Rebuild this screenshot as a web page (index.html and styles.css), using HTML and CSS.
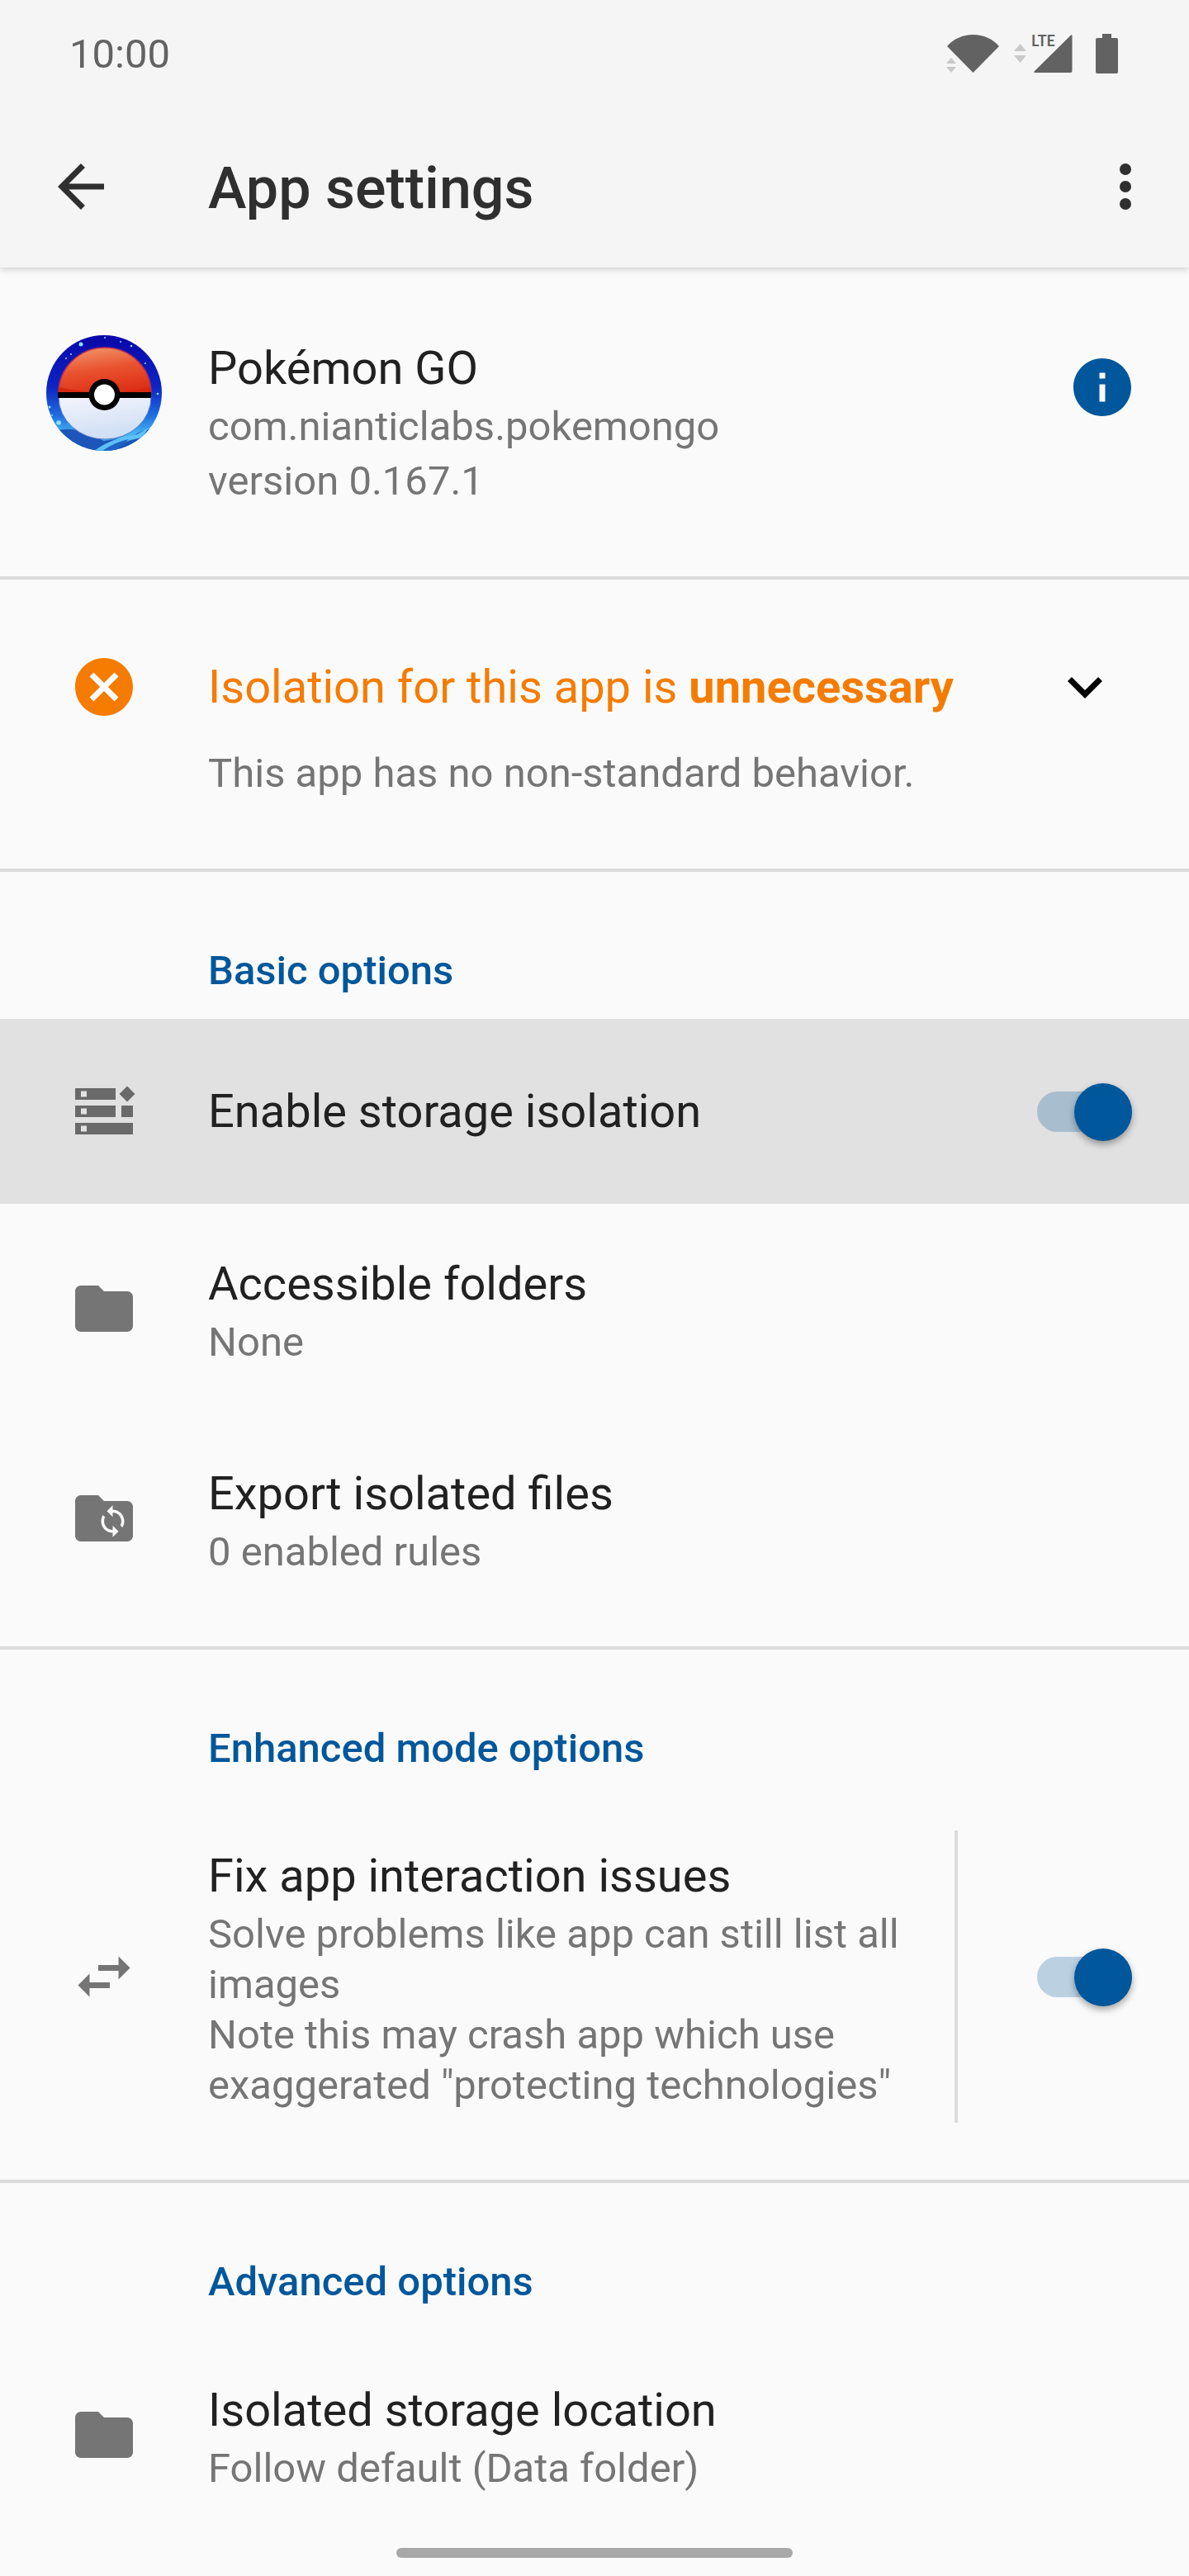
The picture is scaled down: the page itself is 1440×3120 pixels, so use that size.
FILE: index.html
```html
<!DOCTYPE html>
<html lang="en">
<head>
  <meta charset="UTF-8">
  <meta name="viewport" content="width=device-width, initial-scale=1.0">
  <title>App settings</title>
  <link rel="stylesheet" href="styles.css">
</head>
<body>
  <header class="top">
    <div class="status-bar">
      <span class="time">10:00</span>
      <div class="status-icons">
        <svg width="66" height="56" viewBox="0 -4 66 56">
          <path fill="#626262" d="M1 15C9 6 20 1 32.500 1S56 6 64 15L32.500 47z"/>
          <path fill="#c9c9c9" d="M0 36l6-7 6 7zM0 40h12l-6 7z"/>
        </svg>
        <svg width="83" height="56" viewBox="0 -4 83 56">
          <path fill="#c9c9c9" d="M0 21l7.500-9 7.500 9zM0 26h15l-7.500 9z"/>
          <path fill="#626262" d="M69 1.500q1.500-1 1.500 1V45q0 2-2 2H26q-2.500 0-1.500-1.500z"/>
          <text class="lte" x="21" y="15">LTE</text>
        </svg>
        <svg width="27" height="56" viewBox="0 -4 27 56">
          <path fill="#626262" d="M8 0h11v5h6q2 0 2 2v39q0 2-2 2H2q-2 0-2-2V7q0-2 2-2h6z"/>
        </svg>
      </div>
    </div>
    <div class="toolbar">
      <button class="icon-button" aria-label="Back">
        <svg class="icon" viewBox="0 0 24 24"><path d="M20 11H7.830l5.590-5.590L12 4l-8 8 8 8 1.410-1.410L7.830 13H20z"/></svg>
      </button>
      <h1>App settings</h1>
      <button class="icon-button" aria-label="More options">
        <svg class="icon" viewBox="0 0 24 24"><circle cx="12" cy="6" r="2"/><circle cx="12" cy="12" r="2"/><circle cx="12" cy="18" r="2"/></svg>
      </button>
    </div>
  </header>

  <main>
    <section class="app-info">
      <div class="icon-cell">
        <svg width="140" height="140" viewBox="0 0 140 140">
          <defs>
            <linearGradient id="sky" x1="0" y1="0" x2="0" y2="1">
              <stop offset="0" stop-color="#0a06a8"/>
              <stop offset="0.450" stop-color="#0d25c4"/>
              <stop offset="0.700" stop-color="#1e6fe0"/>
              <stop offset="0.850" stop-color="#45b4f5"/>
            </linearGradient>
            <linearGradient id="red" x1="0.200" y1="0" x2="0.500" y2="1">
              <stop offset="0" stop-color="#f0956a"/>
              <stop offset="0.500" stop-color="#e9532f"/>
              <stop offset="1" stop-color="#dd3016"/>
            </linearGradient>
            <linearGradient id="white" x1="0" y1="0" x2="0.300" y2="1">
              <stop offset="0" stop-color="#f4f4fc"/>
              <stop offset="1" stop-color="#cfdff5"/>
            </linearGradient>
            <clipPath id="badge"><circle cx="70" cy="70" r="70"/></clipPath>
          </defs>
          <g clip-path="url(#badge)">
            <rect width="140" height="140" fill="url(#sky)"/>
            <path fill="#1d55b8" d="M0 120q22-10 40-4l30 12 35-6q12-10 35-8v26H0z"/>
            <path fill="#5cc0f7" d="M58 140q22-16 52-20l14-8-8 12q-24 4-40 16z"/>
            <path fill="#1f63c6" d="M68 140q16-11 32-14l-16 14z"/>
            <g fill="#8fe0ff">
              <circle cx="42" cy="11" r="2.500"/>
              <circle cx="30" cy="23" r="1"/>
              <circle cx="24" cy="28" r="1"/>
              <circle cx="71" cy="3" r="1"/>
              <circle cx="90" cy="8" r="1"/>
              <circle cx="103" cy="13" r="1.300"/>
              <circle cx="120" cy="34" r="1"/>
              <circle cx="135" cy="71" r="1.300"/>
              <circle cx="4" cy="87" r="1.500"/>
              <circle cx="7" cy="97" r="1"/>
              <circle cx="15" cy="106" r="2.800"/>
            </g>
          </g>
          <path fill="url(#red)" stroke="#b52c50" stroke-width="1.500" d="M15 70a56 55 0 0 1 112 0z"/>
          <path fill="#d6280f" d="M15 63q56 12 111 0v8H15z"/>
          <path fill="url(#white)" stroke="#5877c4" stroke-width="1" d="M15 75a56 51 0 0 0 112 0z"/>
          <path d="M14 69h113v7H14z"/>
          <circle cx="70.500" cy="72" r="19"/>
          <circle cx="70.500" cy="72" r="12.500" fill="#fff"/>
        </svg>
      </div>
      <div class="text">
        <h2 class="title">Pokémon GO</h2>
        <p class="summary">com.nianticlabs.pokemongo</p>
        <p class="summary version">version 0.167.1</p>
      </div>
      <button class="icon-button info-button" aria-label="App info">
        <svg class="icon" viewBox="0 0 24 24"><path d="M12 2C6.480 2 2 6.480 2 12s4.480 10 10 10 10-4.480 10-10S17.520 2 12 2zm1 15h-2v-6h2v6zm0-8h-2V7h2v2z"/></svg>
      </button>
    </section>

    <section class="verdict">
      <div class="icon-cell orange">
        <svg class="icon" viewBox="0 0 24 24"><path d="M12 2C6.470 2 2 6.470 2 12s4.470 10 10 10 10-4.470 10-10S17.530 2 12 2zm5 13.590L15.590 17 12 13.410 8.410 17 7 15.590 10.590 12 7 8.410 8.410 7 12 10.590 15.590 7 17 8.410 13.410 12 17 15.590z"/></svg>
      </div>
      <div class="text">
        <h2 class="title orange">Isolation for this app is <b>unnecessary</b></h2>
        <p class="summary">This app has no non-standard behavior.</p>
      </div>
      <button class="icon-button expand-button" aria-label="Expand">
        <svg class="icon" viewBox="0 0 24 24"><path d="M16.590 8.590L12 13.170 7.410 8.590 6 10l6 6 6-6z"/></svg>
      </button>
    </section>

    <section class="group">
      <h2 class="group-title">Basic options</h2>
      <label class="row pressed">
        <span class="icon-cell">
          <svg class="icon" viewBox="0 0 24 24"><path fill-rule="evenodd" d="M2 4h14v4H2zM4 5v2h2V5zM2 10h14v4H2zM4 11v2h2v-2zM18 10h4v4h-4zM2 16h20v4H2zM4 17v2h2v-2zM20 3.300L22.700 6 20 8.700 17.300 6z"/></svg>
        </span>
        <span class="text"><span class="title">Enable storage isolation</span></span>
        <span class="widget"><input class="switch" type="checkbox" checked></span>
      </label>
      <a class="row" href="#">
        <span class="icon-cell">
          <svg class="icon" viewBox="0 0 24 24"><path d="M10 4H4c-1.100 0-1.990.900-1.990 2L2 18c0 1.100.900 2 2 2h16c1.100 0 2-.900 2-2V8c0-1.100-.900-2-2-2h-8l-2-2z"/></svg>
        </span>
        <span class="text">
          <span class="title">Accessible folders</span>
          <span class="summary">None</span>
        </span>
      </a>
      <a class="row" href="#">
        <span class="icon-cell">
          <svg class="icon" viewBox="0 0 24 24">
            <path d="M10 4H4c-1.100 0-1.990.900-1.990 2L2 18c0 1.100.900 2 2 2h16c1.100 0 2-.900 2-2V8c0-1.100-.900-2-2-2h-8l-2-2z"/>
            <path fill="#fafafa" transform="translate(9 7) scale(.5)" d="M12 4V1L8 5l4 4V6c3.310 0 6 2.690 6 6 0 1.010-.250 1.970-.700 2.800l1.460 1.460C19.540 15.030 20 13.570 20 12c0-4.420-3.580-8-8-8zm0 14c-3.310 0-6-2.690-6-6 0-1.010.250-1.970.700-2.800L5.240 7.740C4.460 8.970 4 10.430 4 12c0 4.420 3.580 8 8 8v3l4-4-4-4v3z"/>
          </svg>
        </span>
        <span class="text">
          <span class="title">Export isolated files</span>
          <span class="summary">0 enabled rules</span>
        </span>
      </a>
    </section>

    <section class="group">
      <h2 class="group-title">Enhanced mode options</h2>
      <div class="row">
        <span class="icon-cell">
          <svg class="icon" viewBox="0 0 24 24"><path d="M6.990 11L3 15l3.990 4v-3H14v-2H6.990v-3zM21 9l-3.990-4v3H10v2h7.010v3L21 9z"/></svg>
        </span>
        <label class="text" for="fix-interaction">
          <span class="title">Fix app interaction issues</span>
          <span class="summary">Solve problems like app can still list all images<br>Note this may crash app which use exaggerated "protecting technologies"</span>
        </label>
        <span class="widget split"><input class="switch" type="checkbox" id="fix-interaction" checked></span>
      </div>
    </section>

    <section class="group">
      <h2 class="group-title">Advanced options</h2>
      <a class="row" href="#">
        <span class="icon-cell">
          <svg class="icon" viewBox="0 0 24 24"><path d="M10 4H4c-1.100 0-1.990.900-1.990 2L2 18c0 1.100.900 2 2 2h16c1.100 0 2-.900 2-2V8c0-1.100-.900-2-2-2h-8l-2-2z"/></svg>
        </span>
        <span class="text">
          <span class="title">Isolated storage location</span>
          <span class="summary">Follow default (Data folder)</span>
        </span>
      </a>
    </section>
  </main>

  <div class="nav-bar"><div class="nav-handle"></div></div>
</body>
</html>
```

FILE: styles.css
```css
* {
  box-sizing: border-box;
}
body {
  font-family: Roboto, "Liberation Sans", sans-serif;
  margin: 0;
  min-height: 100vh;
  display: flex;
  flex-direction: column;
  background: #fafafa;
  color: #212121;
}
h1, h2, p {
  margin: 0;
}
main {
  flex: 1;
}

/* status bar and toolbar */
.top {
  background: #f5f5f5;
  box-shadow: 0 2px 8px rgba(0, 0, 0, 0.18);
}
.status-bar {
  display: flex;
  justify-content: space-between;
  align-items: center;
  height: 128px;
  padding: 2px 86px 0 84px;
}
.time {
  font-size: 49px;
  color: #626262;
}
.status-icons {
  display: flex;
  gap: 16px;
}
.lte {
  font-family: Lato, sans-serif;
  font-size: 18px;
  font-weight: 700;
  fill: #626262;
}
.toolbar {
  display: flex;
  align-items: center;
  height: 196px;
  padding: 0 35px 0 56px;
  color: #2f2f2f;
}
.toolbar h1 {
  flex: 1;
  margin-left: 112px;
  padding-top: 4px;
  font-size: 70px;
  font-weight: 500;
  line-height: 84px;
}

.icon {
  display: block;
  width: 84px;
  height: 84px;
  fill: currentColor;
}
.icon-button {
  padding: 0;
  border: none;
  background: none;
  color: inherit;
  cursor: pointer;
}
.icon-cell {
  display: flex;
  flex: none;
  justify-content: center;
  width: 252px;
}
.text {
  flex: 1;
}
.title {
  display: block;
  font-size: 56px;
  font-weight: 400;
  line-height: 80px;
}
.summary {
  display: block;
  font-size: 49px;
  line-height: 61px;
  color: #757575;
}
.orange {
  color: #f57c00;
}

/* app header */
.app-info {
  display: flex;
  align-items: flex-start;
  padding: 82px 63px 85px 0;
  border-bottom: 4px solid #dcdcdc;
}
.version {
  margin-top: 5px;
}
.info-button {
  display: flex;
  align-items: center;
  height: 126px;
  color: #01579b;
}

.verdict {
  display: flex;
  align-items: flex-start;
  padding: 88px 84px 85px 0;
  border-bottom: 4px solid #dcdcdc;
}
.verdict .title {
  line-height: 84px;
}
.verdict .summary {
  margin-top: 32px;
}
.verdict b {
  font-weight: 700;
}
.expand-button {
  color: #000;
}

/* option groups */
.group {
  padding: 28px 0;
  border-bottom: 4px solid #dcdcdc;
}
.group:last-child {
  padding-bottom: 0;
  border-bottom: none;
}
.group-title {
  padding: 61px 84px 28px 252px;
  font-size: 49px;
  font-weight: 500;
  line-height: 61px;
  color: #01579b;
}
.row {
  display: flex;
  align-items: center;
  min-height: 254px;
  color: inherit;
  text-decoration: none;
}
.row .text {
  padding: 56px 0;
}
.row .icon-cell {
  color: #757575;
}
.row.pressed {
  min-height: 224px;
  background: #e1e1e1;
}
.row.pressed .icon-cell {
  color: #6a6a6a;
}
.widget {
  display: flex;
  align-items: center;
  justify-content: flex-end;
  padding-right: 69px;
}
.split {
  align-self: stretch;
  width: 284px;
  margin: 41px 0;
  border-left: 4px solid #dcdcdc;
}
.switch {
  appearance: none;
  position: relative;
  width: 115px;
  height: 49px;
  margin: 0;
  border-radius: 25px;
  background: rgba(1, 87, 155, 0.25);
  cursor: pointer;
}
.switch::before {
  content: "";
  position: absolute;
  top: -10px;
  left: 0;
  width: 70px;
  height: 70px;
  border-radius: 50%;
  background: #f1f1f1;
  box-shadow: 0 4px 8px rgba(0, 0, 0, 0.35);
}
.switch:checked::before {
  left: auto;
  right: 0;
  background: #01579b;
}

.nav-bar {
  padding: 8px 0 22px;
}
.nav-handle {
  width: 480px;
  height: 12px;
  margin: 0 auto;
  border-radius: 6px;
  background: #a8a8a8;
}
```
